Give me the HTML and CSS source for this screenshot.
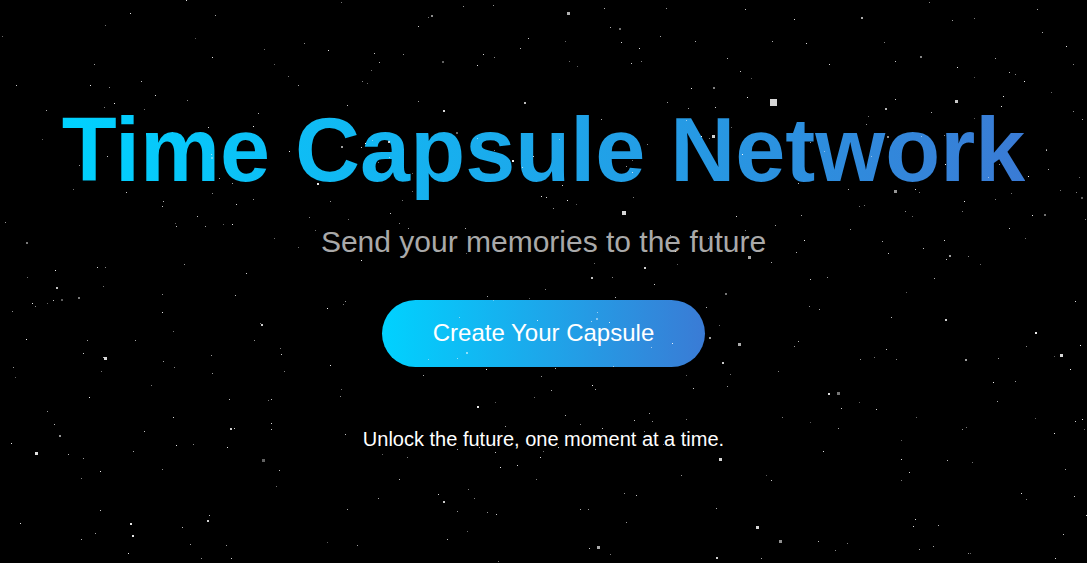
FILE: index.html
```html
<!DOCTYPE html>
<html lang="en">
<head>
    <meta charset="UTF-8">
    <meta name="viewport" content="width=device-width, initial-scale=1.0">
    <title>Time Capsule Network</title>
    <link rel="stylesheet" href="styles.css">
</head>
<body>
    <div class="hero">
        <h1 class="title">Time Capsule Network</h1>
        <p class="tagline">Send your memories to the future</p>
        <button class="cta">Create Your Capsule</button>
        <p class="note">Unlock the future, one moment at a time.</p>
    </div>
    <canvas id="stars"></canvas>
    <script>
        // Starfield drawn on a canvas over the whole page
        const canvas = document.getElementById('stars');
        const ctx = canvas.getContext('2d');
        canvas.width = window.innerWidth;
        canvas.height = window.innerHeight;

        // small seeded random so the sky stays the same on every load
        let seed = 20240611;
        function rand() {
            seed = (seed * 1664525 + 1013904223) % 4294967296;
            return seed / 4294967296;
        }

        for (let i = 0; i < 480; i++) {
            const x = Math.floor(rand() * canvas.width);
            const y = Math.floor(rand() * canvas.height);
            const r = rand();
            const size = r < 0.9 ? 1 : (r < 0.985 ? 2 : 3);
            const alpha = 0.35 + rand() * 0.6;
            ctx.fillStyle = 'rgba(255, 255, 255, ' + alpha.toFixed(2) + ')';
            ctx.fillRect(x, y, size, size);
        }

        // a few brighter ones
        const bright = [[770, 99, 7], [622, 211, 4], [104, 357, 3], [1060, 354, 3], [756, 526, 3], [719, 458, 3]];
        bright.forEach(function(s) {
            ctx.fillStyle = 'rgba(225, 225, 225, 0.95)';
            ctx.fillRect(s[0], s[1], s[2], s[2]);
        });
    </script>
</body>
</html>
```

FILE: styles.css
```css
body {
    background-color: #000000;
    font-family: Arial, "Liberation Sans", sans-serif;
    color: white;
    margin: 0;
    padding: 0;
    height: 100vh;
    overflow: hidden;
}
.hero {
    display: flex;
    flex-direction: column;
    align-items: center;
    text-align: center;
    padding-top: 96px;
}
.title {
    font-size: 90px;
    font-weight: bold;
    line-height: 1.2;
    margin: 0 0 20px 0;
    background: linear-gradient(90deg, #00d2ff, #3a7bd5);
    -webkit-background-clip: text;
    background-clip: text;
    color: transparent;
}
.tagline {
    font-size: 30px;
    line-height: 1.2;
    color: #a9a9a9;
    margin: 0 0 40px 0;
}
.cta {
    font-family: inherit;
    font-size: 24px;
    line-height: 1.2;
    color: #ffffff;
    background: linear-gradient(90deg, #00d2ff, #3a7bd5);
    border: none;
    border-radius: 34px;
    padding: 19px 51px;
    cursor: pointer;
}
.note {
    font-size: 20px;
    line-height: 1.2;
    color: #ffffff;
    margin: 60px 0 0 0;
}
#stars {
    position: absolute;
    top: 0;
    left: 0;
    pointer-events: none;
}
```
